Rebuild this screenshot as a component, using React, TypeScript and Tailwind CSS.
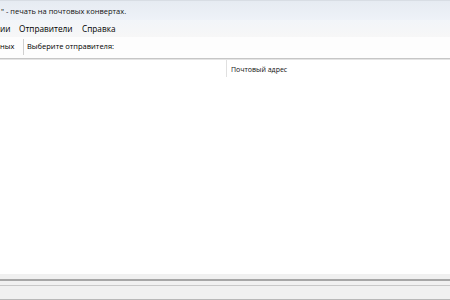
import React from "react";

export default function App() {
  const font = { fontFamily: '"Open Sans", "Noto Sans", sans-serif' };
  return (
    <div className="w-[450px] h-[300px] overflow-hidden flex flex-col bg-white text-[#000]" style={font}>
      {/* Title bar */}
      <div className="h-[20px] flex items-center pt-[2px] bg-gradient-to-b from-[#e6ebf2] to-[#eef2f8] border-t border-[#d8dde4] shrink-0">
        <span className="text-[7.5px] leading-none whitespace-nowrap pl-[1px] text-[#111]">" - печать на почтовых конвертах.</span>
      </div>
      {/* Menu bar */}
      <div className="h-[17px] flex items-center pt-[1px] bg-gradient-to-b from-[#f2f5f9] to-[#f7f7f7] shrink-0 text-[8.25px] leading-none text-[#000]">
        <span className="w-[19px]">ии</span>
        <span className="w-[63px]">Отправители</span>
        <span>Справка</span>
      </div>
      {/* Toolbar */}
      <div className="h-[22px] flex items-center pb-[1px] bg-[#fdfdfd] border-b border-[#c6c6c6] shadow-[0_1px_0_#e4e4e4] shrink-0 text-[7.5px] leading-none text-[#000]">
        <span className="w-[23px]">ных</span>
        <div className="w-px h-[16px] bg-[#d0d0d0] mr-[3px]" />
        <span>Выберите отправителя:</span>
      </div>
      {/* List header */}
      <div className="h-[17px] mt-[1px] flex items-stretch shrink-0 text-[7px] leading-none text-[#111]">
        <div className="w-[227px] border-r border-[#e0e0e0]" />
        <div className="flex items-center pl-[4px] pt-[1px]">Почтовый адрес</div>
      </div>
      {/* Body */}
      <div className="flex-1 bg-white" />
      {/* Bottom */}
      <div className="h-[5px] bg-[#f0f0f0] shrink-0" />
      <div className="h-[2px] bg-[#a6a6a6] shrink-0" />
      <div className="h-[4px] bg-[#f0f0f0] shrink-0" />
      <div className="h-px bg-[#c8c8c8] shrink-0" />
      <div className="h-[13px] bg-[#f0f0f0] shrink-0" />
      <div className="h-px bg-[#b8b8b8] shrink-0" />
    </div>
  );
}
